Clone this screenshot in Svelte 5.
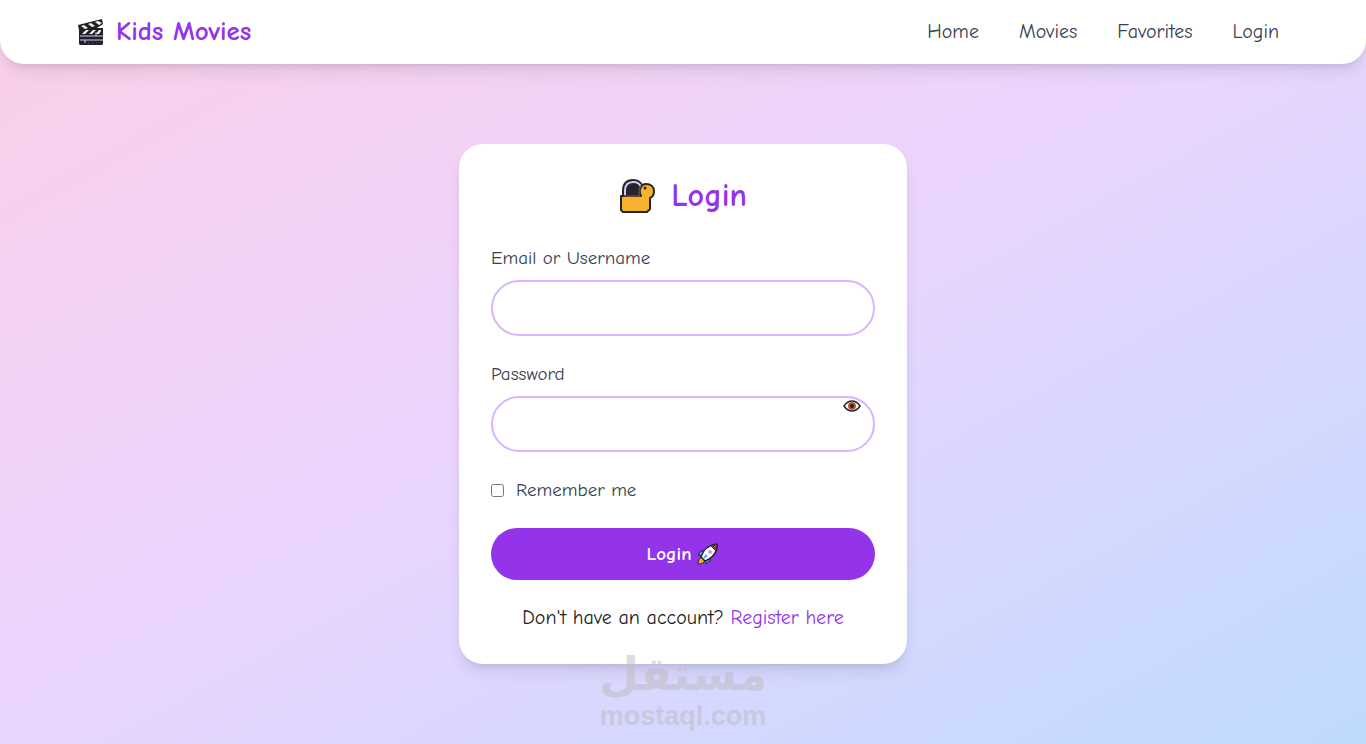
<script>
  let identifier = '';
  let password = '';
  let remember = false;
  let showPassword = false;

  const links = ['Home', 'Movies', 'Favorites', 'Login'];
</script>

<div class="page">
  <header class="navbar">
    <nav class="navbar-inner">
      <a class="brand" href="#home">
        <svg class="brand-icon" viewBox="0 0 26 28" aria-hidden="true">
          <path d="M0 7 24 1l1 5-6 4h6v16l-1 1H2l-1-1V12Z" fill="#20202c" />
          <path d="m3 8 4 3 3-1-4-3Zm7-2 4 3 3-1-4-3Zm7-2 4 3 3-2-4-2ZM4 16l4-4h3l-4 4Zm7 0 4-4h3l-4 4Zm7 0 3-4h2v1l-2 3Z" fill="#fff0dc" />
          <path d="M2 18h23M2 22h23M7 22v3M18 14v4" stroke="#d9c8ec" stroke-width="1" />
          <path d="M10 25h1m3 0h1m3 0h1m3 0h1" stroke="#536083" stroke-width="1" />
        </svg>
        <span>Kids Movies</span>
      </a>
      <div class="links">
        {#each links as link}
          <a class="nav-link" href="#{link.toLowerCase()}">{link}</a>
        {/each}
      </div>
    </nav>
  </header>

  <main class="content">
    <form class="card" on:submit|preventDefault>
      <h1 class="title">
        <svg class="lock-icon" viewBox="0 0 36 36" aria-hidden="true">
          <path d="M4 18v-5C4 5 8 2 14 2c6 0 10 4 10 10v6Z" fill="#24242e" stroke="#24242e" stroke-width="2" />
          <path d="M6 18v-5c0-6 3-9 8-9 4 0 7 2 8 5" fill="none" stroke="#d8c9ec" stroke-width="2" />
          <path d="M2 18h20c-3-6 0-12 5-12 5 0 8 3 8 7 0 4-1 6-4 7v11l-3 3H4l-2-2Z" fill="#f6b22d" stroke="#24242e" stroke-width="2" stroke-linejoin="round" />
          <path d="M5 18h16c-2-4-1-8 1-10" fill="none" stroke="#a65a2b" stroke-width="1" />
          <circle cx="26" cy="10" r="1.5" fill="#24242e" />
        </svg>
        <span>Login</span>
      </h1>

      <div class="field">
        <label for="identifier">Email or Username</label>
        <input id="identifier" class="text-input" type="text" bind:value={identifier} />
      </div>

      <div class="field">
        <label for="password">Password</label>
        <div class="password-wrap">
          <input
            id="password"
            class="text-input"
            type={showPassword ? 'text' : 'password'}
            value={password}
            on:input={(e) => (password = e.currentTarget.value)}
          />
          <button
            type="button"
            class="toggle"
            aria-label="Show password"
            on:click={() => (showPassword = !showPassword)}
          >
            <svg class="eye-icon" viewBox="0 0 18 12" aria-hidden="true">
              <path d="M1 6c2-3 5-5 8-5s6 2 8 5c-2 3-5 5-8 5S3 9 1 6Z" fill="#fff" stroke="#24242e" stroke-width="1.5" />
              <circle cx="9" cy="6" r="4" fill="#b65a32" />
              <circle cx="9" cy="6" r="2" fill="#20202c" />
            </svg>
          </button>
        </div>
      </div>

      <label class="remember">
        <input type="checkbox" bind:checked={remember} />
        <span>Remember me</span>
      </label>

      <button class="submit" type="submit">
        <span>Login</span>
        <svg class="rocket-icon" viewBox="0 0 22 22" aria-hidden="true">
          <path d="M7 8H4l-3 4 5 1M13 14v4l-4 3-1-5" fill="#55a5e8" stroke="#24242e" stroke-width="1" />
          <path d="M5 14c-3 1-4 4-4 7 4 0 6-1 7-4Z" fill="#f9a825" stroke="#24242e" stroke-width="1" />
          <path d="M4 14C6 7 11 2 20 1c1 7-4 14-12 17Z" fill="#fff" stroke="#24242e" stroke-width="1.5" stroke-linejoin="round" />
          <path d="M14 3 20 1c.5 2 0 4-1 7Z" fill="#8a4632" stroke="#24242e" stroke-width="1" />
          <circle cx="13" cy="9" r="2" fill="#b5a8d4" />
          <path d="m7 15 3-3" stroke="#55a5e8" stroke-width="2" />
        </svg>
      </button>

      <p class="register">Don't have an account? <a href="#register">Register here</a></p>
    </form>
  </main>

  <div class="watermark">
    <span class="watermark-ar" lang="ar" dir="rtl">مستقل</span>
    <span class="watermark-en">mostaql.com</span>
  </div>
</div>

<style>
  :global(body) {
    margin: 0;
  }

  .page {
    position: relative;
    display: flex;
    flex-direction: column;
    box-sizing: border-box;
    min-height: 100vh;
    background: linear-gradient(to bottom right, #fbcfe8, #e9d5ff, #bfdbfe);
    color: #1c1c24;
    font-family: 'Comic Sans MS', 'Comic Neue', 'Open Sans', sans-serif;
    font-size: 19px;
    line-height: 28px;
  }

  a {
    text-decoration: none;
  }

  .navbar {
    background: #fff;
    border-radius: 0 0 24px 24px;
    box-shadow: 0 10px 15px -3px rgba(0, 0, 0, 0.1), 0 4px 6px -4px rgba(0, 0, 0, 0.1);
  }

  .navbar-inner {
    display: flex;
    align-items: center;
    justify-content: space-between;
    box-sizing: border-box;
    max-width: 1280px;
    height: 64px;
    margin: 0 auto;
    padding: 0 32px;
  }

  .brand {
    display: flex;
    align-items: center;
    gap: 12px;
    padding-left: 3px;
    color: #9333ea;
    font-size: 27px;
    font-weight: 700;
  }

  .brand-icon {
    width: 26px;
    height: 28px;
  }

  .links {
    display: flex;
    gap: 16px;
    font-size: 20px;
  }

  .nav-link {
    padding: 8px 12px;
    color: #374151;
  }

  .content {
    display: flex;
    justify-content: center;
    padding: 80px 16px;
  }

  .card {
    display: flex;
    flex-direction: column;
    gap: 24px;
    box-sizing: border-box;
    width: 100%;
    max-width: 448px;
    padding: 32px;
    background: #fff;
    border-radius: 24px;
    box-shadow: 0 10px 15px -3px rgba(0, 0, 0, 0.1), 0 4px 6px -4px rgba(0, 0, 0, 0.1);
  }

  .title {
    display: flex;
    align-items: center;
    justify-content: center;
    gap: 16px;
    margin: 0;
    padding-bottom: 4px;
    color: #9333ea;
    font-size: 32px;
    font-weight: 700;
    line-height: 40px;
  }

  .lock-icon {
    width: 36px;
    height: 36px;
  }

  .field {
    display: flex;
    flex-direction: column;
    gap: 8px;
    color: #374151;
  }

  .text-input {
    box-sizing: border-box;
    width: 100%;
    height: 56px;
    padding: 12px 20px;
    border: 2px solid #d8b4fe;
    border-radius: 28px;
    background: #fff;
    font: inherit;
  }

  .password-wrap {
    position: relative;
    display: flex;
  }

  .toggle {
    position: absolute;
    top: 4px;
    right: 14px;
    display: flex;
    padding: 0;
    border: none;
    background: none;
    cursor: pointer;
  }

  .eye-icon {
    width: 18px;
    height: 12px;
  }

  .remember {
    display: flex;
    align-items: center;
    gap: 12px;
    color: #374151;
  }

  .remember input {
    width: 13px;
    height: 13px;
    margin: 0;
  }

  .submit {
    display: flex;
    align-items: center;
    justify-content: center;
    gap: 6px;
    height: 52px;
    border: none;
    border-radius: 26px;
    background: #9333ea;
    color: #fff;
    font: inherit;
    font-weight: 600;
    cursor: pointer;
  }

  .rocket-icon {
    width: 22px;
    height: 22px;
  }

  .register {
    margin: 0;
    font-size: 20px;
    text-align: center;
  }

  .register a {
    color: #9333ea;
  }

  .watermark {
    position: absolute;
    bottom: 12px;
    left: 50%;
    display: flex;
    flex-direction: column;
    align-items: center;
    transform: translateX(-50%);
    color: rgba(190, 185, 190, 0.5);
    font-weight: 700;
    pointer-events: none;
  }

  .watermark-ar {
    font-family: 'DejaVu Sans', sans-serif;
    font-size: 46px;
    line-height: 52px;
  }

  .watermark-en {
    font-family: 'Liberation Sans', sans-serif;
    font-size: 27px;
    line-height: 32px;
  }
</style>
